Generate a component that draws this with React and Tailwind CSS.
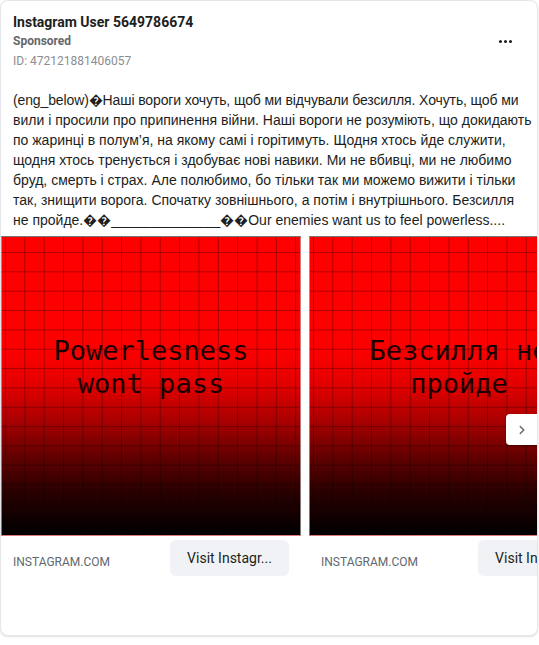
import React from 'react';
import { ChevronRight } from 'lucide-react';

// lines as they wrap in the ad preview
const bodyLines = [
  '(eng_below)\uFFFDНаші вороги хочуть, щоб ми відчували безсилля. Хочуть, щоб ми',
  'вили і просили про припинення війни. Наші вороги не розуміють, що докидають',
  'по жаринці в полум’я, на якому самі і горітимуть. Щодня хтось йде служити,',
  'щодня хтось тренується і здобуває нові навики. Ми не вбивці, ми не любимо',
  'бруд, смерть і страх. Але полюбимо, бо тільки так ми можемо вижити і тільки',
  'так, знищити ворога. Спочатку зовнішнього, а потім і внутрішнього. Безсилля',
  'не пройде.\uFFFD\uFFFD______________\uFFFD\uFFFDOur enemies want us to feel powerless....'
];

const slides = [
  { id: 1, lines: ['Powerlesness', 'wont pass'] },
  { id: 2, lines: ['Безсилля не', 'пройде'] }
];

const GridImage = ({ lines }) => (
  <div className="relative w-[300px] h-[300px] shrink-0 overflow-hidden border border-[#c8c8c8]/60 bg-[linear-gradient(to_right,rgba(0,0,0,0.3)_1px,transparent_1px),linear-gradient(to_bottom,rgba(0,0,0,0.3)_1px,transparent_1px),linear-gradient(to_bottom,#ff0000_0%,#fc0000_38%,#e20000_50%,#a80000_62%,#600000_74%,#280000_86%,#000000_100%)] bg-[size:19.35px_19.35px,19.35px_19.35px,100%_100%] bg-[position:3px_15px,3px_15px,0_0]">
    <div className="absolute left-0 right-0 top-[97px] text-center text-[27px] leading-[33px] text-[#1a0000] whitespace-nowrap font-['DejaVu_Sans_Mono',monospace]">
      {lines.map((line) => (
        <div key={line}>{line}</div>
      ))}
    </div>
  </div>
);

const App = () => {
  return (
    <div className="w-[539px] h-[645px] bg-white font-['Roboto',sans-serif]">
      <div className="relative w-[538px] overflow-hidden rounded-lg border border-[#e4e6eb] bg-white pt-[11px] pb-[59px] shadow-[0_1px_2px_rgba(0,0,0,0.12)]">
        {/* Header */}
        <div className="flex justify-between px-3">
          <div>
            <div className="text-[14px] leading-[20px] font-bold text-[#1c1e21]">Instagram User 5649786674</div>
            <div className="text-[12px] leading-[18px] font-bold text-[#65676b]">Sponsored</div>
            <div className="mt-[2px] text-[12px] leading-[18px] text-[#8a8d91]">ID: 472121881406057</div>
          </div>
          <button className="mt-[9px] flex h-[40px] w-[40px] items-center justify-center gap-[2px]">
            <span className="h-[3px] w-[3px] rounded-full bg-[#1c1e21]" />
            <span className="h-[3px] w-[3px] rounded-full bg-[#1c1e21]" />
            <span className="h-[3px] w-[3px] rounded-full bg-[#1c1e21]" />
          </button>
        </div>

        {/* Body */}
        <p className="mt-[20px] px-3 text-[14px] leading-[20px] text-[#1c1e21] font-['Liberation_Sans',Arial,sans-serif]">
          {bodyLines.map((line, idx) => (
            <span key={idx} className={`block whitespace-nowrap ${idx === 0 ? 'tracking-[-0.12px]' : ''}`}>
              {line}
            </span>
          ))}
        </p>

        {/* Carousel */}
        <div className="relative mt-[6px] flex gap-2">
          {slides.map((slide) => (
            <div key={slide.id} className="w-[300px] shrink-0">
              <GridImage lines={slide.lines} />
              <div className="flex items-start justify-between px-3 pt-[4px]">
                <span className="mt-[14px] text-[12px] leading-[16px] text-[#606770]">INSTAGRAM.COM</span>
                <button className="h-[36px] w-[119px] rounded-md bg-[#f0f2f5] text-[14px] text-[#1c1e21] whitespace-nowrap">
                  Visit Instagr...
                </button>
              </div>
            </div>
          ))}
          <button className="absolute right-0 top-[178px] flex h-[31px] w-[31px] items-center justify-center rounded-l bg-white shadow-[0_1px_3px_rgba(0,0,0,0.2)]">
            <ChevronRight className="h-[14px] w-[14px] text-[#606770]" strokeWidth={2.5} />
          </button>
        </div>
      </div>
    </div>
  );
};

export default App;
